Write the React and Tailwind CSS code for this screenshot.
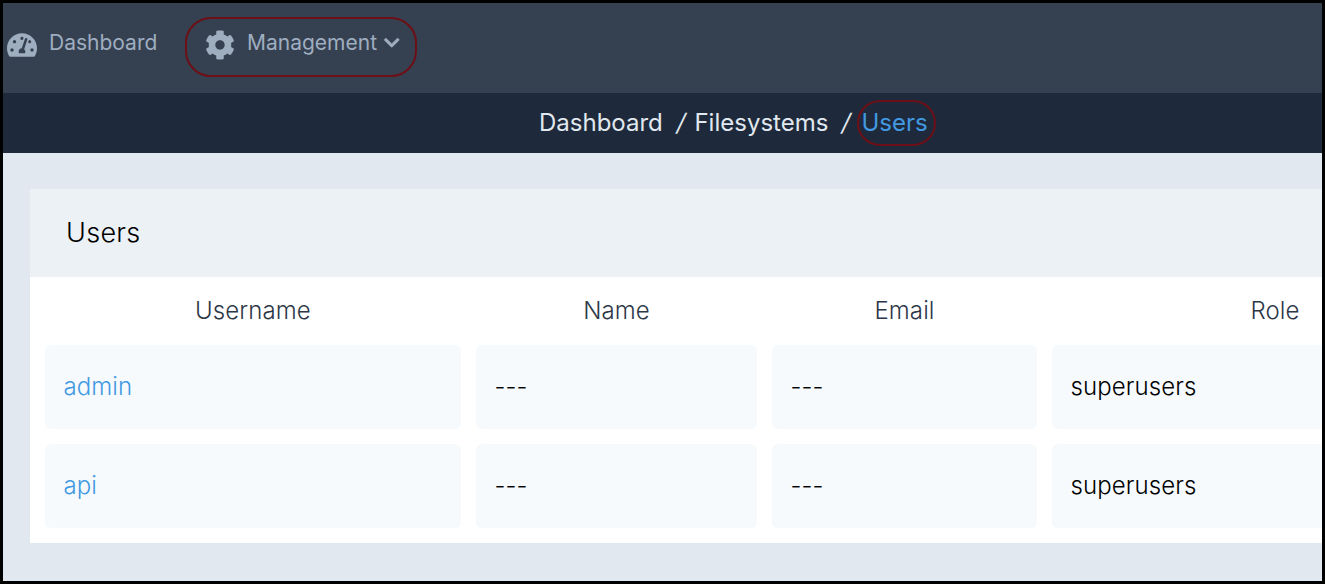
import { FaTachometerAlt, FaCog, FaChevronDown } from "react-icons/fa";

const rows = [
  { user: "admin", name: "---", email: "---", role: "superusers" },
  { user: "api", name: "---", email: "---", role: "superusers" },
];

const cell = "flex h-[84px] items-center rounded-md bg-[#f6fafd] pl-[18.5px]";
const columns = "grid w-[1468px] grid-cols-[416px_281px_265px_446px] gap-x-[15px] pl-[15px]";

export default function App() {
  return (
    <div className="h-[584px] w-[1325px] overflow-hidden border-[3px] border-black bg-[#e1e8ef] font-['Inter',sans-serif] text-[24px] font-light leading-none tracking-[0.1px] text-black">
      <nav className="flex h-[90px] items-start bg-[#354150] text-[21px] font-normal tracking-normal text-[#9fadc0]">
        <div className="flex h-[80px] w-[181.5px] items-center pl-1">
          <FaTachometerAlt className="mt-1 size-[30px]" />
          <span className="mb-0.5 ml-3">Dashboard</span>
        </div>
        <div className="mt-[13.5px] flex h-[60.5px] w-[232.5px] items-center rounded-[26px] border-2 border-[#6d0f16] pb-[7px] pl-[18px]">
          <FaCog className="mt-[3px] size-[30px]" />
          <span className="mb-0.5 ml-[12.5px]">Management</span>
          <FaChevronDown className="mb-0.5 ml-1.5 size-[17.5px]" stroke="currentColor" strokeWidth="12" />
        </div>
      </nav>
      <div className="flex h-[60px] items-center bg-[#1e2a3b] pl-[536px] font-normal tracking-normal text-[#e1e8ef]">
        <span>Dashboard</span>
        <span className="ml-3.5 -skew-x-12">/</span>
        <span className="ml-[9px]">Filesystems</span>
        <span className="ml-3.5 -skew-x-12">/</span>
        <span className="ml-1.5 flex h-[46px] w-[79px] items-center justify-center rounded-[24px] border-2 border-[#6d0f16] pr-1 text-[#4299e1]">Users</span>
      </div>
      <main className="pl-[27px] pt-9">
        <h1 className="flex h-[88px] items-center bg-[#ecf1f6] pb-0.5 pl-9 text-[27px] tracking-[0.3px]">Users</h1>
        <section className="h-[266px] overflow-hidden bg-white">
          <div className={`${columns} h-[68px] items-center text-center text-[#2d3748]`}>
            <span>Username</span>
            <span>Name</span>
            <span>Email</span>
            <span>Role</span>
          </div>
          <div className="flex flex-col gap-[15px]">
            {rows.map((row) => (
              <div key={row.user} className={columns}>
                <div className={`${cell} text-[#4299e1]`}>{row.user}</div>
                <div className={cell}>{row.name}</div>
                <div className={cell}>{row.email}</div>
                <div className={cell}>{row.role}</div>
              </div>
            ))}
          </div>
        </section>
      </main>
    </div>
  );
}
